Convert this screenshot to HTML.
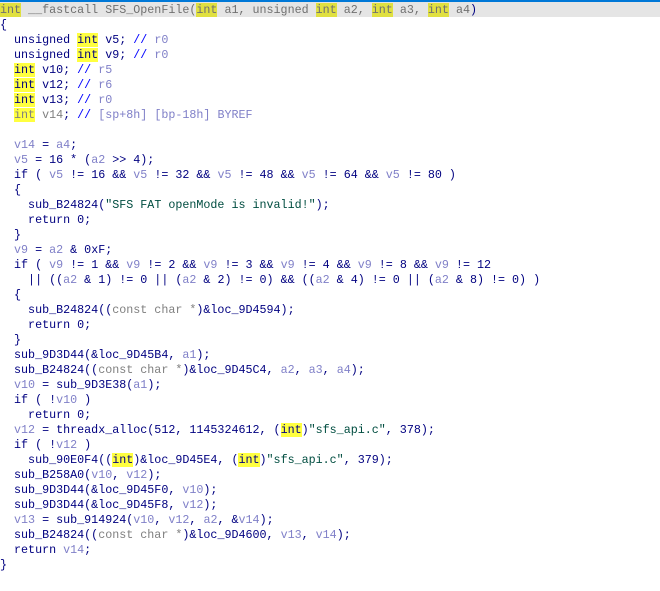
<!DOCTYPE html>
<html><head><meta charset="utf-8"><style>
html,body{margin:0;padding:0;background:#fff;width:660px;height:591px;overflow:hidden}
pre{margin:0;padding:3px 0 0 0;font-family:"Liberation Mono",monospace;font-size:11.7px;line-height:15px;color:#000080;white-space:pre;position:relative}
.l0{position:absolute;left:0;top:0;width:660px;height:17px;background:#e5e5e5;border-top:2px solid #0078d7;box-sizing:border-box}
.g{color:#707070}
.v{color:#8080c8}
.c{color:#0000ff}
.cr{color:#8080c8}
.t{color:#808080}
.s{color:#004d40}
.i{background:#ffff40}
.i0{background:#e0e040}
</style></head><body>
<div class="l0"></div>
<pre><span class="g"><span class="i0">int</span> __fastcall SFS_OpenFile(<span class="i0">int</span> a1, unsigned <span class="i0">int</span> a2, <span class="i0">int</span> a3, <span class="i0">int</span> a4</span>)
{
  unsigned <span class="i">int</span> v5; <span class="c">//</span> <span class="cr">r0</span>
  unsigned <span class="i">int</span> v9; <span class="c">//</span> <span class="cr">r0</span>
  <span class="i">int</span> v10; <span class="c">//</span> <span class="cr">r5</span>
  <span class="i">int</span> v12; <span class="c">//</span> <span class="cr">r6</span>
  <span class="i">int</span> v13; <span class="c">//</span> <span class="cr">r0</span>
  <span class="i t">int</span><span class="t"> v14</span>; <span class="c">//</span> <span class="cr">[sp+8h] [bp-18h] BYREF</span>

  <span class="v">v14</span> = <span class="v">a4</span>;
  <span class="v">v5</span> = 16 * (<span class="v">a2</span> &gt;&gt; 4);
  if ( <span class="v">v5</span> != 16 &amp;&amp; <span class="v">v5</span> != 32 &amp;&amp; <span class="v">v5</span> != 48 &amp;&amp; <span class="v">v5</span> != 64 &amp;&amp; <span class="v">v5</span> != 80 )
  {
    sub_B24824(<span class="s">"SFS FAT openMode is invalid!"</span>);
    return 0;
  }
  <span class="v">v9</span> = <span class="v">a2</span> &amp; 0xF;
  if ( <span class="v">v9</span> != 1 &amp;&amp; <span class="v">v9</span> != 2 &amp;&amp; <span class="v">v9</span> != 3 &amp;&amp; <span class="v">v9</span> != 4 &amp;&amp; <span class="v">v9</span> != 8 &amp;&amp; <span class="v">v9</span> != 12
    || ((<span class="v">a2</span> &amp; 1) != 0 || (<span class="v">a2</span> &amp; 2) != 0) &amp;&amp; ((<span class="v">a2</span> &amp; 4) != 0 || (<span class="v">a2</span> &amp; 8) != 0) )
  {
    sub_B24824((<span class="t">const char *</span>)&amp;loc_9D4594);
    return 0;
  }
  sub_9D3D44(&amp;loc_9D45B4, <span class="v">a1</span>);
  sub_B24824((<span class="t">const char *</span>)&amp;loc_9D45C4, <span class="v">a2</span>, <span class="v">a3</span>, <span class="v">a4</span>);
  <span class="v">v10</span> = sub_9D3E38(<span class="v">a1</span>);
  if ( !<span class="v">v10</span> )
    return 0;
  <span class="v">v12</span> = threadx_alloc(512, 1145324612, (<span class="i">int</span>)<span class="s">"sfs_api.c"</span>, 378);
  if ( !<span class="v">v12</span> )
    sub_90E0F4((<span class="i">int</span>)&amp;loc_9D45E4, (<span class="i">int</span>)<span class="s">"sfs_api.c"</span>, 379);
  sub_B258A0(<span class="v">v10</span>, <span class="v">v12</span>);
  sub_9D3D44(&amp;loc_9D45F0, <span class="v">v10</span>);
  sub_9D3D44(&amp;loc_9D45F8, <span class="v">v12</span>);
  <span class="v">v13</span> = sub_914924(<span class="v">v10</span>, <span class="v">v12</span>, <span class="v">a2</span>, &amp;<span class="v">v14</span>);
  sub_B24824((<span class="t">const char *</span>)&amp;loc_9D4600, <span class="v">v13</span>, <span class="v">v14</span>);
  return <span class="v">v14</span>;
}</pre>
</body></html>
